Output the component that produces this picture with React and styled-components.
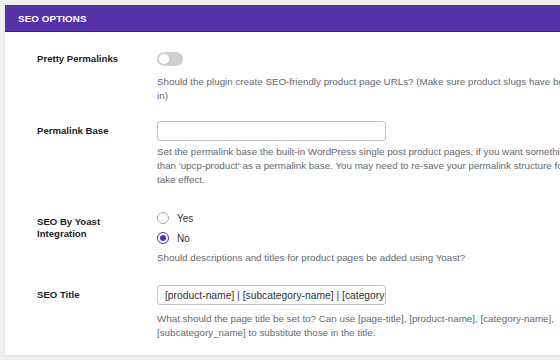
import React from "react";
import styled, { createGlobalStyle } from "styled-components";

const Global = createGlobalStyle`
  html, body { margin: 0; padding: 0; }
  body {
    background: #f1f1f2;
    width: 560px;
    height: 360px;
    overflow: hidden;
    font-family: "Liberation Sans", Arial, sans-serif;
  }
`;

const Page = styled.div`
  padding: 5px 0 0 5px;
`;

const Card = styled.section`
  width: 600px;
  background: #fff;
  box-shadow: 0 1px 3px rgba(0, 0, 0, 0.08);
  padding-bottom: 15px;
`;

const Header = styled.div`
  height: 26px;
  background: #5531a9;
  border-bottom: 1px solid #3f1e94;
  display: flex;
  align-items: center;
  padding-left: 13px;
  color: #fff;
  font-weight: 700;
  font-size: 9.8px;
  letter-spacing: 0.1px;
`;

const Body = styled.div`
  display: flex;
  flex-direction: column;
  padding-top: 20px;
  gap: 18px;
`;

const Row = styled.div`
  display: grid;
  grid-template-columns: 152px 1fr;
  margin-top: ${(p) => p.$mt || 0}px;
`;

const Label = styled.div`
  padding-left: 32px;
  padding-right: 36px;
  font-size: 9.6px;
  font-weight: 700;
  color: #1d2327;
  line-height: 12px;
  padding-top: ${(p) => p.$pt || 0}px;
`;

const Field = styled.div`
  display: flex;
  flex-direction: column;
  align-items: flex-start;
`;

const Desc = styled.p`
  margin: ${(p) => p.$mt || 0}px 0 0;
  font-size: 9.8px;
  color: #646970;
  line-height: 14px;
  width: 448px;
`;

const Toggle = styled.span`
  display: inline-flex;
  align-items: center;
  width: 26px;
  height: 14px;
  border-radius: 7px;
  background: #cfcfcf;
  padding: 0 2px;
  box-sizing: border-box;
`;

const Knob = styled.span`
  width: 10px;
  height: 10px;
  border-radius: 50%;
  background: #fff;
`;

const Input = styled.div`
  width: 229px;
  height: 20px;
  box-sizing: border-box;
  border: 1px solid #c3c4c7;
  border-radius: 3px;
  background: #fff;
  display: flex;
  align-items: center;
  padding-left: 7px;
  overflow: hidden;
  white-space: nowrap;
  font-size: 10.3px;
  color: #2c3338;
`;

const RadioList = styled.div`
  display: flex;
  flex-direction: column;
  gap: 8px;
`;

const RadioItem = styled.label`
  display: flex;
  align-items: center;
  gap: 8px;
  font-size: 10px;
  color: #2c3338;
  height: 12px;
`;

const Radio = styled.span`
  width: 12px;
  height: 12px;
  box-sizing: border-box;
  border-radius: 50%;
  border: 1px solid ${(p) => (p.$checked ? "#5531a9" : "#a7aaad")};
  display: flex;
  align-items: center;
  justify-content: center;
  &::after {
    content: "";
    width: 6px;
    height: 6px;
    border-radius: 50%;
    background: ${(p) => (p.$checked ? "#5531a9" : "transparent")};
  }
`;

export default function App() {
  return (
    <>
      <Global />
      <Page>
        <Card>
          <Header>SEO OPTIONS</Header>
          <Body>
            <Row>
              <Label $pt={1}>Pretty Permalinks</Label>
              <Field>
                <Toggle>
                  <Knob />
                </Toggle>
                <Desc $mt={9}>
                  Should the plugin create SEO-friendly product page URLs? (Make sure product slugs have been filled in)
                </Desc>
              </Field>
            </Row>
            <Row>
              <Label $pt={4}>Permalink Base</Label>
              <Field>
                <Input />
                <Desc $mt={4}>
                  Set the permalink base the built-in WordPress single post product pages, if you want something other than 'upcp-product' as a permalink base. You may need to re-save your permalink structure for it to take effect.
                </Desc>
              </Field>
            </Row>
            <Row $mt={7}>
              <Label $pt={4}>SEO By Yoast Integration</Label>
              <Field>
                <RadioList>
                  <RadioItem>
                    <Radio />
                    Yes
                  </RadioItem>
                  <RadioItem>
                    <Radio $checked />
                    No
                  </RadioItem>
                </RadioList>
                <Desc $mt={7}>
                  Should descriptions and titles for product pages be added using Yoast?
                </Desc>
              </Field>
            </Row>
            <Row $mt={2}>
              <Label $pt={4}>SEO Title</Label>
              <Field>
                <Input>[product-name] | [subcategory-name] | [category-name]</Input>
                <Desc $mt={7}>
                  What should the page title be set to? Can use [page-title], [product-name], [category-name], [subcategory_name] to substitute those in the title.
                </Desc>
              </Field>
            </Row>
          </Body>
        </Card>
      </Page>
    </>
  );
}
